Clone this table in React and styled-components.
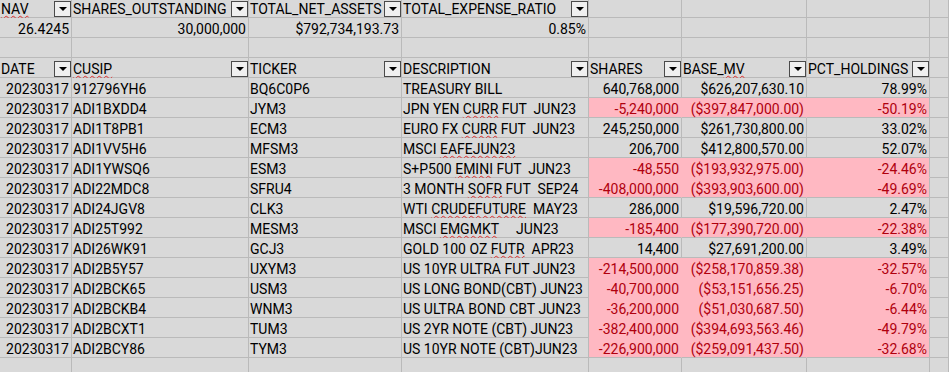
import React from "react";
import styled, { createGlobalStyle } from "styled-components";

const GRID = "#bababa";
const CELL = "#d9d9d9";
const PINK = "#ffb8c2";
const RED = "#b0000e";

const Global = createGlobalStyle`
  html, body { margin: 0; padding: 0; background: ${CELL}; overflow: hidden; }
  body { font-family: Roboto, "Liberation Sans", sans-serif; }
`;

const Sheet = styled.div`
  display: grid;
  grid-template-columns: 72px 177px 153px 187px 93px 125px 123px 19px;
  grid-template-rows: 18px;
  grid-auto-rows: 20px;
  width: 949px;
  height: 372px;
  overflow: hidden;
  background: ${CELL};
`;

const Cell = styled.div`
  box-sizing: border-box;
  display: flex;
  align-items: flex-end;
  justify-content: ${(p) => (p.$align === "right" ? "flex-end" : "flex-start")};
  padding: 0 ${(p) => (p.$align === "right" ? "2px" : "0")} 0 ${(p) => (p.$align === "right" ? "0" : "1px")};
  background: ${(p) => (p.$fill ? PINK : CELL)};
  color: ${(p) => (p.$fill ? RED : "#000")};
  border-right: 1px solid ${(p) => (p.$pinkRight ? PINK : GRID)};
  border-bottom: 1px solid ${(p) => (p.$pinkBottom ? PINK : GRID)};
  font-size: 14px;
  line-height: 16px;
  white-space: pre;
  overflow: visible;
  min-width: 0;
`;

const HeaderCell = styled(Cell)`
  justify-content: space-between;
  padding-right: 0;
`;

const FilterButton = styled.div`
  box-sizing: border-box;
  flex: none;
  width: 17px;
  height: 16px;
  border: 1px solid #4a4a4a;
  background: #efefef;
  display: flex;
  align-items: center;
  justify-content: center;
  &::after {
    content: "";
    width: 0;
    height: 0;
    border-left: 4px solid transparent;
    border-right: 4px solid transparent;
    border-top: 4px solid #000;
  }
`;

const Squiggle = styled.span`
  text-decoration: underline wavy #e2302f;
  text-decoration-thickness: 1px;
  text-underline-offset: 1px;
  text-decoration-skip-ink: none;
`;

function Marked({ text }) {
  const parts = text.split("~");
  return parts.map((s, i) =>
    i % 2 === 1 ? <Squiggle key={i}>{s}</Squiggle> : <React.Fragment key={i}>{s}</React.Fragment>
  );
}

const topHeaders = ["~NAV~", "SHARES_OUTSTANDING", "TOTAL_NET_ASSETS", "TOTAL_EXPENSE_RATIO"];
const topValues = ["26.4245", "30,000,000", "$792,734,193.73", "0.85%"];
const headers = ["DATE", "~CUSIP~", "TICKER", "DESCRIPTION", "SHARES", "BASE_~MV~", "PCT_HOLDINGS"];

const rows = [
  ["912796YH6", "BQ6C0P6", "TREASURY BILL", "640,768,000", "$626,207,630.10", "78.99%", false],
  ["ADI1BXDD4", "JYM3", "JPN YEN ~CURR~ FUT  JUN23", "-5,240,000", "($397,847,000.00)", "-50.19%", true],
  ["ADI1T8PB1", "ECM3", "EURO FX ~CURR~ FUT  JUN23", "245,250,000", "$261,730,800.00", "33.02%", false],
  ["ADI1VV5H6", "MFSM3", "MSCI ~EAFEJUN23~", "206,700", "$412,800,570.00", "52.07%", false],
  ["ADI1YWSQ6", "ESM3", "S+P500 ~EMINI~ FUT  JUN23", "-48,550", "($193,932,975.00)", "-24.46%", true],
  ["ADI22MDC8", "SFRU4", "3 MONTH ~SOFR~ FUT  SEP24", "-408,000,000", "($393,903,600.00)", "-49.69%", true],
  ["ADI24JGV8", "CLK3", "WTI ~CRUDEFUTURE~  MAY23", "286,000", "$19,596,720.00", "2.47%", false],
  ["ADI25T992", "MESM3", "MSCI ~EMGMKT~     JUN23", "-185,400", "($177,390,720.00)", "-22.38%", true],
  ["ADI26WK91", "GCJ3", "GOLD 100 OZ ~FUTR~  APR23", "14,400", "$27,691,200.00", "3.49%", false],
  ["ADI2B5Y57", "UXYM3", "US 10YR ULTRA FUT JUN23", "-214,500,000", "($258,170,859.38)", "-32.57%", true],
  ["ADI2BCK65", "USM3", "US LONG BOND(CBT) JUN23", "-40,700,000", "($53,151,656.25)", "-6.70%", true],
  ["ADI2BCKB4", "WNM3", "US ULTRA BOND CBT JUN23", "-36,200,000", "($51,030,687.50)", "-6.44%", true],
  ["ADI2BCXT1", "TUM3", "US 2YR NOTE (CBT) JUN23", "-382,400,000", "($394,693,563.46)", "-49.79%", true],
  ["ADI2BCY86", "TYM3", "US 10YR NOTE (CBT)JUN23", "-226,900,000", "($259,091,437.50)", "-32.68%", true],
];

export default function App() {
  const cells = [];
  topHeaders.forEach((h, i) =>
    cells.push(
      <HeaderCell key={`th${i}`}>
        <span><Marked text={h} /></span>
        <FilterButton />
      </HeaderCell>
    )
  );
  for (let i = 0; i < 4; i++) cells.push(<Cell key={`the${i}`} />);
  topValues.forEach((v, i) =>
    cells.push(
      <Cell key={`tv${i}`} $align="right">
        {v}
      </Cell>
    )
  );
  for (let i = 0; i < 4; i++) cells.push(<Cell key={`tve${i}`} />);
  for (let i = 0; i < 8; i++) cells.push(<Cell key={`e3${i}`} />);
  headers.forEach((h, i) =>
    cells.push(
      <HeaderCell key={`h${i}`}>
        <span><Marked text={h} /></span>
        <FilterButton />
      </HeaderCell>
    )
  );
  cells.push(<Cell key="he" />);
  rows.forEach((r, ri) => {
    const [cusip, ticker, desc, shares, mv, pct, neg] = r;
    const nextNeg = ri + 1 < rows.length && rows[ri + 1][6];
    cells.push(<Cell key={`d${ri}a`} $align="right">20230317</Cell>);
    cells.push(<Cell key={`d${ri}b`}>{cusip}</Cell>);
    cells.push(<Cell key={`d${ri}c`}>{ticker}</Cell>);
    cells.push(
      <Cell key={`d${ri}d`}>
        <span><Marked text={desc} /></span>
      </Cell>
    );
    [shares, mv, pct].forEach((v, ci) =>
      cells.push(
        <Cell
          key={`d${ri}n${ci}`}
          $align="right"
          $fill={neg}
          $pinkRight={neg && ci < 2}
          $pinkBottom={neg && nextNeg}
        >
          {v}
        </Cell>
      )
    );
    cells.push(<Cell key={`d${ri}h`} />);
  });
  for (let i = 0; i < 8; i++) cells.push(<Cell key={`last${i}`} />);

  return (
    <>
      <Global />
      <Sheet>{cells}</Sheet>
    </>
  );
}
